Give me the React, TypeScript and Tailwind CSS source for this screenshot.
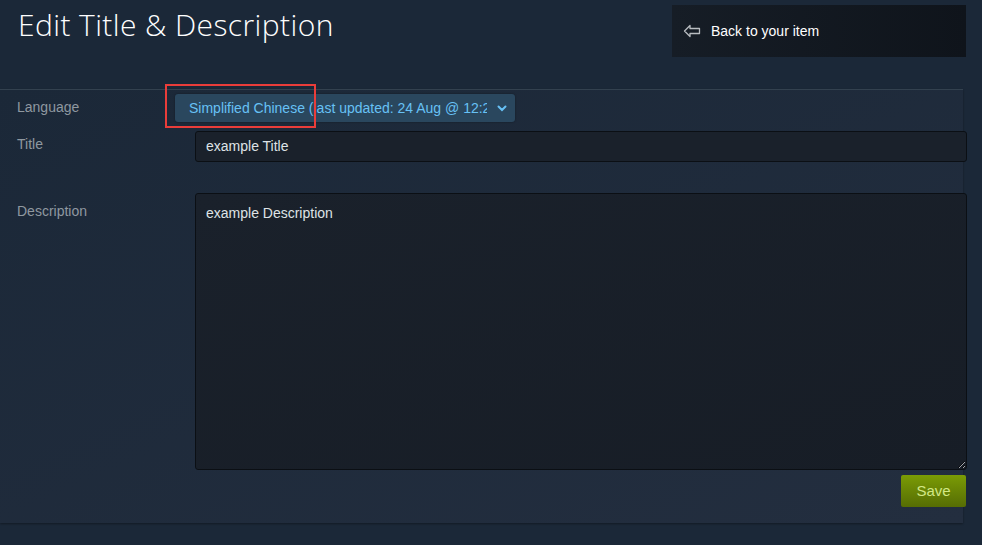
const BackArrow = () => (
  <svg width="18" height="14" viewBox="0 0 18 14" fill="none">
    <path
      d="M7 1.5 L1.5 7 L7 12.5 L7 9.5 L16.5 9.5 L16.5 4.5 L7 4.5 Z"
      stroke="#b8bcc0"
      strokeWidth="1.3"
      strokeLinejoin="round"
    />
  </svg>
);

const Chevron = () => (
  <svg width="10" height="7" viewBox="0 0 10 7" fill="none">
    <path d="M1.5 1.5 L5 5 L8.5 1.5" stroke="#67c1f5" strokeWidth="2" strokeLinecap="round" />
  </svg>
);

export default function App() {
  return (
    <div className="relative w-[982px] h-[545px] overflow-hidden bg-[#1b2838] font-['Liberation_Sans',Arial,sans-serif]">
      {/* header */}
      <div className="flex items-start justify-between pl-[18px] pr-[16px] h-[89px]">
        <h1 className="mt-[5px] text-[30px] leading-[40px] font-light text-white tracking-[0.4px] font-['Open_Sans','Noto_Sans',sans-serif]">
          Edit Title &amp; Description
        </h1>
        <a className="mt-[5px] flex items-center w-[294px] h-[52px] pl-[11px] gap-[10px] bg-gradient-to-r from-[#161d26] to-[#0f141b] text-white text-[14px]">
          <BackArrow />
          <span>Back to your item</span>
        </a>
      </div>

      {/* form panel */}
      <div className="w-[963px] h-[434px] border-t border-[#33414f] bg-gradient-to-br from-[#1b2838] to-[#232e3f] shadow-[0_1px_2px_rgba(0,0,0,0.35)]">
        <div className="flex items-start h-[37px]">
          <div className="w-[175px] shrink-0 pl-[17px] pt-[7px] text-[14px] text-[#8f98a0]">Language</div>
          <div className="mt-[4px] shrink-0 flex items-center w-[340px] h-[28px] pl-[14px] pr-[8px] rounded-[3px] bg-[#2a475e] shadow-[0_0_2px_rgba(0,0,0,0.4)]">
            <span className="flex-1 overflow-hidden whitespace-nowrap text-[14px] leading-[26px] text-[#67c1f5]">
              Simplified Chinese (last updated: 24 Aug @ 12:25pm)
            </span>
            <span className="ml-[10px]">
              <Chevron />
            </span>
          </div>
        </div>

        <div className="flex items-start h-[62px] mt-[4px]">
          <div className="w-[195px] shrink-0 pl-[17px] pt-[3px] text-[14px] text-[#8f98a0]">Title</div>
          <div className="shrink-0 flex items-center w-[772px] h-[31px] px-[10px] rounded-[3px] border border-[#0b0f14] bg-[#1a212b] text-[14px] text-[#dfe3e6]">
            example Title
          </div>
        </div>

        <div className="flex items-start">
          <div className="w-[195px] shrink-0 pl-[17px] pt-[8px] text-[14px] text-[#8f98a0]">Description</div>
          <textarea
            readOnly
            value="example Description"
            className="shrink-0 w-[772px] h-[277px] px-[10px] pt-[9px] rounded-[3px] border border-[#0b0f14] bg-gradient-to-br from-[#1a212b] to-[#171d26] text-[14px] text-[#dfe3e6] outline-none"
          />
        </div>

        <div className="flex justify-end mt-[5px] -mr-[3px]">
          <button className="w-[65px] h-[32px] rounded-[2px] bg-gradient-to-b from-[#7b9c05] to-[#566d04] text-[15px] text-[#d2e885]">
            Save
          </button>
        </div>
      </div>

      {/* annotation highlight */}
      <div className="absolute left-[165px] top-[84px] w-[151px] h-[44px] border-[2.5px] border-[#ea3d3a]" />
    </div>
  );
}
